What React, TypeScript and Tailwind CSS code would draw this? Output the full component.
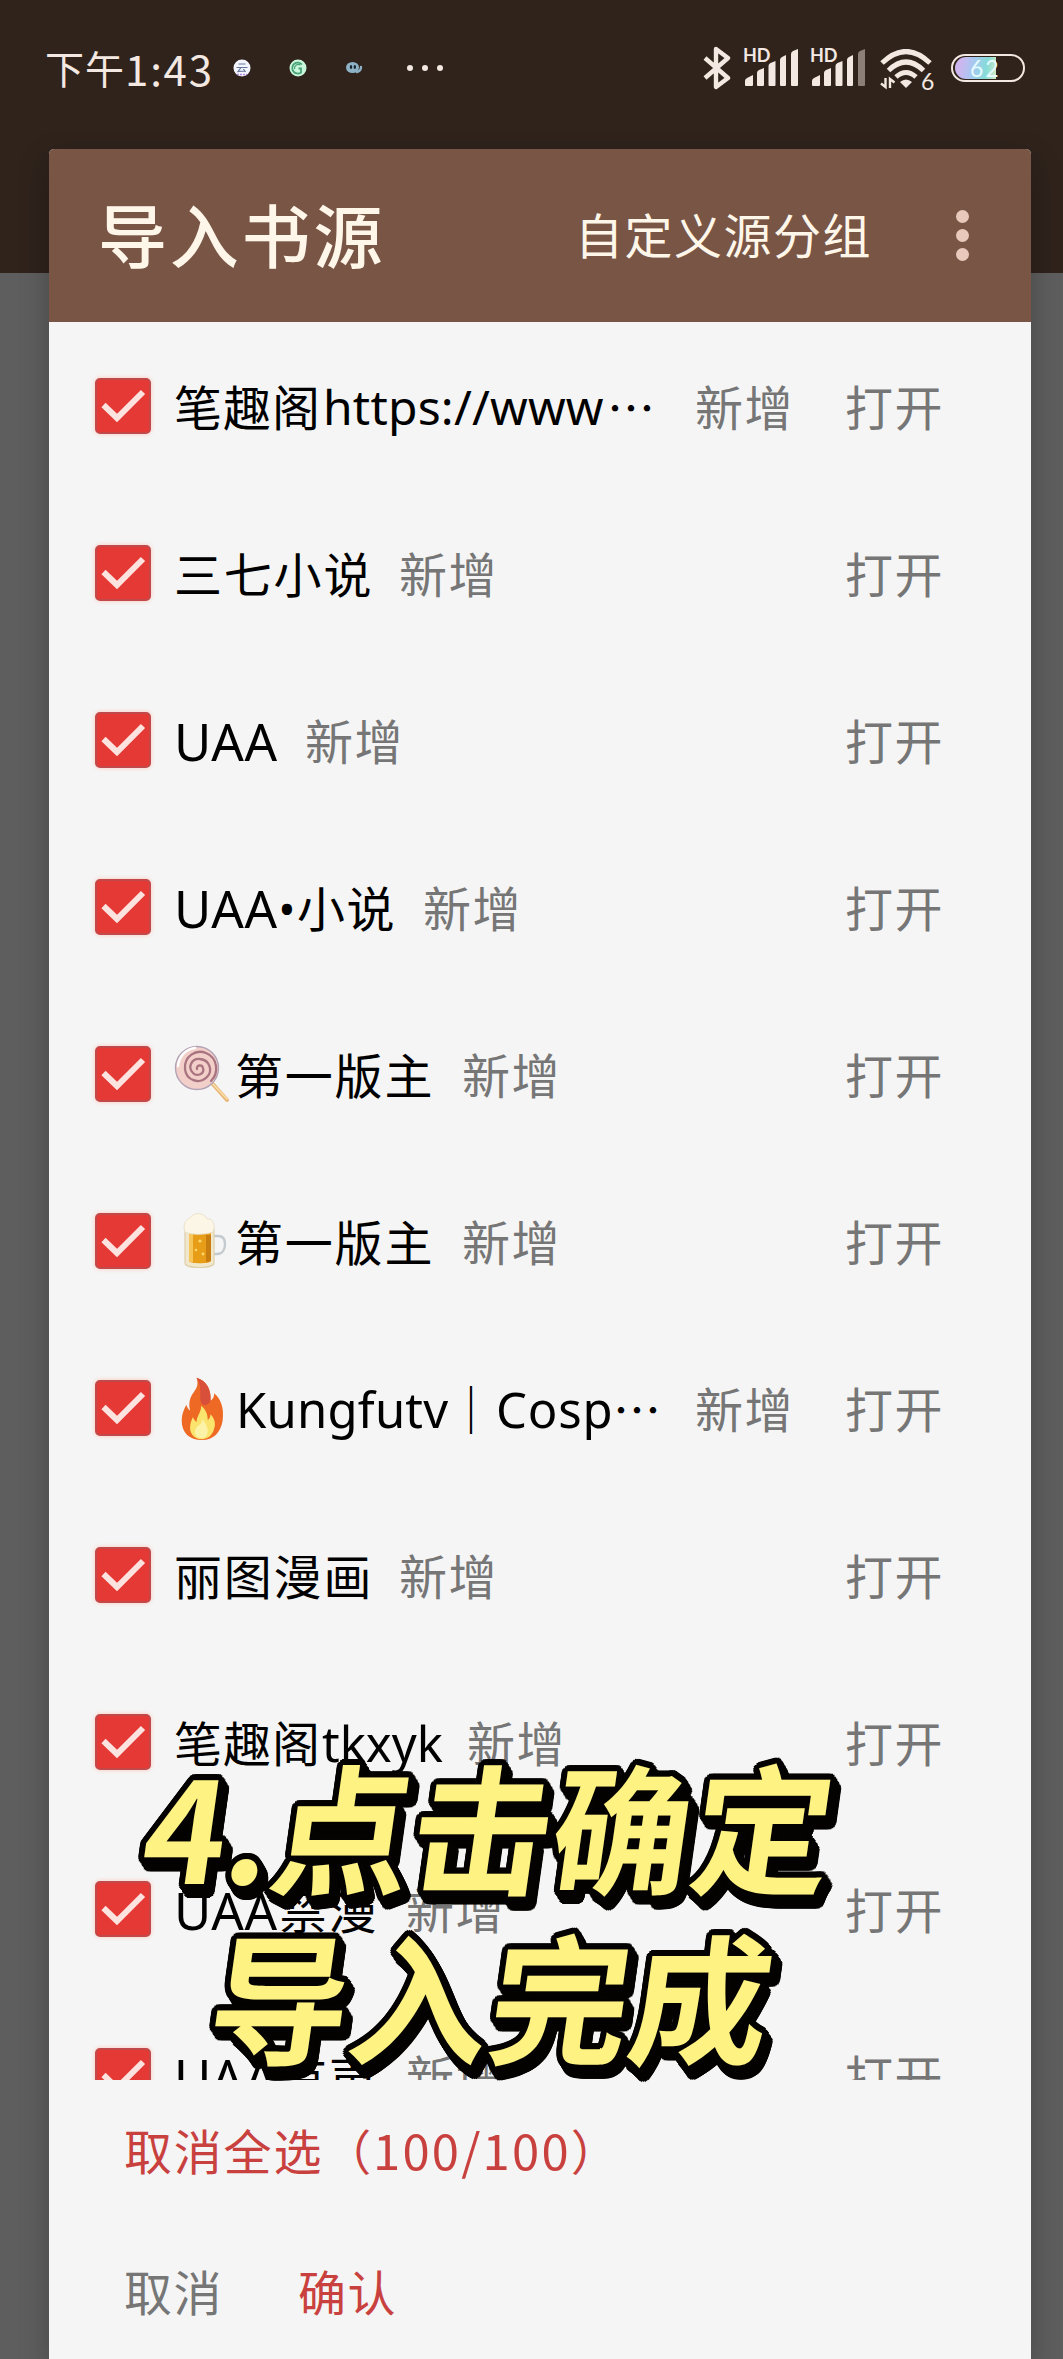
import React from "react";

const cjk = "font-['Noto_Sans_CJK_SC',sans-serif]";
const latin = "pt-[5px] font-['Noto_Sans','Noto_Sans_CJK_SC',sans-serif]";

function Lollipop() {
  return (
    <svg viewBox="0 0 56 60" className="h-[60px] w-[56px] shrink-0">
      <path d="M37 38L53 56" stroke="#e9b678" strokeWidth="4" strokeLinecap="round" />
      <path d="M38 39L53 55" stroke="#f8dfa8" strokeWidth="1.6" strokeLinecap="round" />
      <circle cx="23" cy="24" r="21.5" fill="#f3cfc9" stroke="#b3a3b5" strokeWidth="1.4" />
      <path
        d="M23 25c-1-4 5-5 6-1 2 6-6 9-10 5-6-6-1-15 7-14 10 1 13 12 7 18-8 8-21 3-22-8C10 12 22 5 32 9c12 5 13 20 5 28"
        fill="none"
        stroke="#a87480"
        strokeWidth="2.3"
        strokeLinecap="round"
      />
      <path d="M4 22C5 12 12 5 21 4" fill="none" stroke="#fff" strokeWidth="2.4" strokeLinecap="round" />
    </svg>
  );
}

function Beer() {
  return (
    <svg viewBox="0 0 56 60" className="h-[60px] w-[56px] shrink-0">
      <path d="M40 25h4c5 0 7 3 7 8s-2 10-8 10h-3" fill="none" stroke="#c3cbd0" strokeWidth="2.4" />
      <path d="M11 18h29v34c0 6-29 6-29 0z" fill="#f1e7cd" stroke="#ddcfa8" strokeWidth="1.2" />
      <path d="M15 22h22v28c0 3-22 3-22 0z" fill="#e79d18" />
      <path d="M15 22h4v29c-3 0-4 0-4-2z" fill="#f6c65a" />
      <path d="M32 24h5v25c0 1-2 2-5 2z" fill="#c87d10" />
      <path d="M11 21C8 12 13 8 16 7c4-7 15-5 17 1 6-1 9 6 6 13-8 3-21 3-28 0z" fill="#fbf6e6" stroke="#ebe2cc" strokeWidth="1" />
      <circle cx="26" cy="30" r="1.6" fill="#ffd76a" />
      <circle cx="22" cy="39" r="1.3" fill="#ffd76a" />
      <circle cx="29" cy="43" r="1.4" fill="#ffd76a" />
    </svg>
  );
}

function Fire() {
  return (
    <svg viewBox="0 0 56 70" className="ml-[4px] h-[67px] w-[52px] shrink-0" preserveAspectRatio="none">
      <path
        d="M20 3C31 6 36 16 35 27c3-2 4-5 4-8 7 6 11 15 9 29-2 12-10 20-22 20C12 68 4 60 4 48c0-8 3-13 5-17 1 3 2 5 4 6C11 29 13 23 17 18c4-5 5-9 3-15z"
        fill="#ee6a24"
      />
      <path d="M20 3C31 6 36 16 35 27c-2 5-8 6-10 2-3-6 2-15-5-26z" fill="#d9503a" />
      <path
        d="M25 32c5 4 7 9 7 15 2-1 3-4 3-6 4 4 6 9 4 15-2 8-8 11-13 11-8 0-13-5-13-12 0-5 2-8 3-11 1 2 2 4 4 5 0-6 5-10 5-17z"
        fill="#fbe46e"
      />
      <path d="M26 46c7 7 9 19 0 20-10 0-9-10-4-13 3-2 4-4 4-7z" fill="#fdf3a8" />
    </svg>
  );
}

type Row = {
  name: React.ReactNode;
  width: string;
};

const rows: Row[] = [
  {
    name: (
      <>
        <span className="w-[149px] shrink-0 tracking-[1px]">笔趣阁</span>
        <span className={`w-[284px] shrink-0 text-[48px] tracking-[0.2px] ${latin}`}>https://www</span>
        <span>…</span>
      </>
    ),
    width: "w-[521px]",
  },
  { name: <span className="tracking-[1.8px]">三七小说</span>, width: "w-[225px]" },
  { name: <span className={`text-[51px] tracking-[0.6px] ${latin}`}>UAA</span>, width: "w-[131px]" },
  {
    name: (
      <>
        <span className={`w-[103px] shrink-0 text-[51px] tracking-[0.6px] ${latin}`}>UAA</span>
        <span className={`w-[20px] shrink-0 text-center text-[46px] ${latin}`}>•</span>
        <span className="tracking-[1.5px]">小说</span>
      </>
    ),
    width: "w-[249px]",
  },
  {
    name: (
      <>
        <span className="flex w-[61px] shrink-0 items-center pt-[3px]">
          <Lollipop />
        </span>
        <span className="tracking-[1.8px]">第一版主</span>
      </>
    ),
    width: "w-[288px]",
  },
  {
    name: (
      <>
        <span className="flex w-[61px] shrink-0 items-center pt-[3px]">
          <Beer />
        </span>
        <span className="tracking-[1.8px]">第一版主</span>
      </>
    ),
    width: "w-[288px]",
  },
  {
    name: (
      <>
        <span className="flex w-[62px] shrink-0 items-center pt-[3px]">
          <Fire />
        </span>
        <span className={`w-[211px] shrink-0 text-[49px] tracking-[0.2px] ${latin}`}>Kungfutv</span>
        <span className="w-[49px] shrink-0 font-medium">｜</span>
        <span className={`w-[117px] shrink-0 text-[49px] tracking-[0.8px] ${latin}`}>Cosp</span>
        <span>…</span>
      </>
    ),
    width: "w-[521px]",
  },
  { name: <span className="tracking-[1.8px]">丽图漫画</span>, width: "w-[225px]" },
  {
    name: (
      <>
        <span className="w-[148px] shrink-0 tracking-[1px]">笔趣阁</span>
        <span className={`text-[49px] ${latin}`}>tkxyk</span>
      </>
    ),
    width: "w-[293px]",
  },
  {
    name: (
      <>
        <span className={`w-[105px] shrink-0 text-[51px] tracking-[0.6px] ${latin}`}>UAA</span>
        <span className="tracking-[1.5px]">禁漫</span>
      </>
    ),
    width: "w-[232px]",
  },
  {
    name: (
      <>
        <span className={`w-[105px] shrink-0 text-[51px] tracking-[0.6px] ${latin}`}>UAA</span>
        <span className="tracking-[1.5px]">有声</span>
      </>
    ),
    width: "w-[232px]",
  },
];

function Checkbox() {
  return (
    <span className="flex size-[56px] shrink-0 items-center justify-center rounded-[5px] border-2 border-[#c2494a] bg-[#e53935] shadow-[0_0_4px_#ffc4b8]">
      <svg viewBox="0 0 52 52" className="size-[52px]">
        <path d="M6.500 25L20 38L46 12" fill="none" stroke="#fde3e0" strokeWidth="6" />
      </svg>
    </span>
  );
}

function Signal({ weak = false }: { weak?: boolean }) {
  return (
    <span className="relative block h-[40px] w-[57px]">
      <span className="absolute -top-[3px] left-0 font-['Lato',sans-serif] text-[18px] leading-[20px] font-bold">HD</span>
      <svg viewBox="0 0 57 40" className="h-[40px] w-[57px]">
        <path
          d="M2 37v-4q0-2 2-3l6-3v10q0 1-1 1H3q-1 0-1-1zM14 37V25q0-2 2-3l5-2v17q0 1-1 1h-5q-1 0-1-1zM25.500 37V18q0-2 2-3l5-2v24q0 1-1 1h-5q-1 0-1-1zM37 37V12q0-2 2-3l4-2v30q0 1-1 1h-4q-1 0-1-1z"
          fill="currentColor"
        />
        <path d="M48 37V6q0-2 2-3l5-2v36q0 1-1 1h-5q-1 0-1-1z" fill={weak ? "#8b7f78" : "currentColor"} />
      </svg>
    </span>
  );
}

function StatusBar() {
  return (
    <div className="flex h-[136px] items-center text-[#f3e8e2]">
      <span className={`-mt-[2px] ml-[45px] flex w-[188px] items-center whitespace-nowrap text-[39px] tracking-[1px] ${cjk}`}>
        下午<span className="text-[42px] tracking-[1.8px]">1:43</span>
      </span>
      <svg viewBox="0 0 18 18" className="size-[18px]">
        <circle cx="9" cy="9" r="8.500" fill="#f4f6ff" />
        <path d="M5.500 5h7M3.500 8.500h11M8 8.500L5 12.500l7-.5M10.500 10l2 3" stroke="#66779b" strokeWidth="1.200" fill="none" />
        <path d="M4 15.500h10" stroke="#b68be0" strokeWidth="1.500" strokeDasharray="2 1" />
      </svg>
      <svg viewBox="0 0 18 18" className="ml-[38px] size-[18px]">
        <circle cx="9" cy="9" r="8.500" fill="#c9f7dc" />
        <path d="M13 5.500A5.500 5.500 0 1 0 12 13.500V9.500H9.500" fill="none" stroke="#4aa377" strokeWidth="1.800" />
        <path d="M5.500 10a4 4 0 0 1 6-4" fill="none" stroke="#4aa377" strokeWidth="1.200" />
      </svg>
      <svg viewBox="0 0 18 18" className="ml-[38px] size-[18px]">
        <ellipse cx="7.500" cy="8.500" rx="6.500" ry="5.500" fill="#8db2c6" />
        <path d="M12 13q4-1 4-5" fill="none" stroke="#8db2c6" strokeWidth="2.400" strokeLinecap="round" />
        <ellipse cx="6" cy="8" rx="1.200" ry="2" fill="#17242e" />
        <ellipse cx="9.800" cy="8" rx="1.200" ry="2" fill="#17242e" />
      </svg>
      <span className="ml-[44px] flex gap-[9px]">
        <i className="size-[6px] rounded-full bg-current" />
        <i className="size-[6px] rounded-full bg-current" />
        <i className="size-[6px] rounded-full bg-current" />
      </span>
      <span className="ml-auto flex items-center">
        <svg viewBox="0 0 28 44" className="h-[44px] w-[28px]" fill="none" stroke="currentColor" strokeWidth="4.400" strokeLinejoin="round">
          <path d="M2 12L25 32L13 41V3L25 12L2 32" />
        </svg>
        <span className="ml-[12px]">
          <Signal />
        </span>
        <span className="ml-[10px]">
          <Signal weak />
        </span>
        <span className="relative mt-[3px] ml-[13px] block h-[42px] w-[53px]">
          <svg viewBox="0 0 53 42" className="h-[42px] w-[53px]" fill="none" stroke="currentColor" strokeWidth="5">
            <path d="M2 14Q26-9 50 14M8.500 21.500Q26 4.500 43.500 21.500M16 28Q26 19 36 28" />
            <path d="M20 33Q26 28 32 33L26 39Z" fill="currentColor" stroke="none" />
            <path d="M5.500 29v9L1 34.500M10 39v-9l4.500 3.500" strokeWidth="2.400" />
          </svg>
          <span className="absolute top-[20px] left-[41px] font-['Lato',sans-serif] text-[23px] leading-[24px]">6</span>
        </span>
        <span className="mr-[38px] ml-[18px] flex h-[28px] w-[74px] items-center rounded-full border-2 border-current p-[2px]">
          <span className="flex h-[22px] w-[41px] items-center rounded-l-full bg-[linear-gradient(100deg,#cdb6f0_15%,#a6c8f0_45%,#85dcd8_75%,#d9ecc0)]">
            <span className="ml-[15px] font-['Lato',sans-serif] text-[23px] leading-[22px] tracking-[2px] text-[#e6fbff]">62</span>
          </span>
        </span>
      </span>
    </div>
  );
}

function roundedOutline(radius: number, dx: number, dy: number, steps: number) {
  const shadows: string[] = [];
  for (let s = 0; s <= steps; s++) {
    const ox = (dx * s) / steps;
    const oy = (dy * s) / steps;
    for (let a = 0; a < 20; a++) {
      const t = (a / 20) * Math.PI * 2;
      shadows.push(`${(ox + radius * Math.cos(t)).toFixed(1)}px ${(oy + radius * Math.sin(t)).toFixed(1)}px 0 #050302`);
    }
  }
  return shadows.join(",");
}

const captionShadow = roundedOutline(6, 6, 8, 3);
const captionLine = "block whitespace-nowrap -skew-x-[8deg] text-[#fdf282]";

export default function App() {
  return (
    <div className="relative h-[2359px] w-[1063px] overflow-hidden bg-[#5e5e5e]">
      <div className="absolute inset-x-0 top-0 h-[273px] bg-[#2f231c]" />
      <div className="relative">
        <StatusBar />
        <main
          className={`mt-[13px] mr-[32px] ml-[49px] flex h-[2210px] flex-col overflow-hidden rounded-t-[5px] bg-[#f5f5f5] shadow-[0_12px_30px_rgba(0,0,0,0.25)] ${cjk}`}
        >
          <header className="flex h-[173px] shrink-0 items-center bg-[#795545] text-[#fff6ea]">
            <h1 className="-mt-[4px] ml-[49px] text-[69px] leading-none font-medium tracking-[2.800px]">导入书源</h1>
            <span className="-mt-[6px] ml-auto text-[48px] leading-none tracking-[1.500px]">自定义源分组</span>
            <span className="mr-[62px] ml-[84px] flex flex-col gap-[6px]">
              <i className="size-[13px] rounded-full bg-[#e8c9bb]" />
              <i className="size-[13px] rounded-full bg-[#e8c9bb]" />
              <i className="size-[13px] rounded-full bg-[#e8c9bb]" />
            </span>
          </header>
          <ul className="h-[1758px] shrink-0 overflow-hidden text-[48px] leading-none">
            {rows.map((row, i) => (
              <li key={i} className="flex h-[167px] items-center pl-[46px]">
                <Checkbox />
                <div className="-mt-[2px] ml-[23px] flex grow items-center">
                  <span className={`flex shrink-0 items-center whitespace-nowrap text-black ${row.width}`}>{row.name}</span>
                  <span className="tracking-[1.500px] text-[#767676]">新增</span>
                </div>
                <span className="-mt-[2px] mr-[87px] tracking-[1.500px] text-[#767676]">打开</span>
              </li>
            ))}
          </ul>
          <footer className="flex grow flex-col pl-[75px] text-[48px] leading-none">
            <div className="mt-[44px] flex items-center text-[#c9413f]">
              <span className="tracking-[1.800px]">取消全选（</span>
              <span className="text-[49px] tracking-[2.200px]">100/100</span>
              <span>）</span>
            </div>
            <div className="mt-[93px] flex gap-[75px]">
              <span className="tracking-[1.500px] text-[#767676]">取消</span>
              <span className="tracking-[1.500px] text-[#c9413f]">确认</span>
            </div>
          </footer>
        </main>
      </div>
      <div
        className={`absolute top-[1738px] left-[146px] text-[140px] leading-[170px] font-bold ${cjk}`}
        style={{ textShadow: captionShadow }}
      >
        <span className={captionLine}>4.点击确定</span>
        <span className={`ml-[66px] ${captionLine}`}>导入完成</span>
      </div>
    </div>
  );
}
